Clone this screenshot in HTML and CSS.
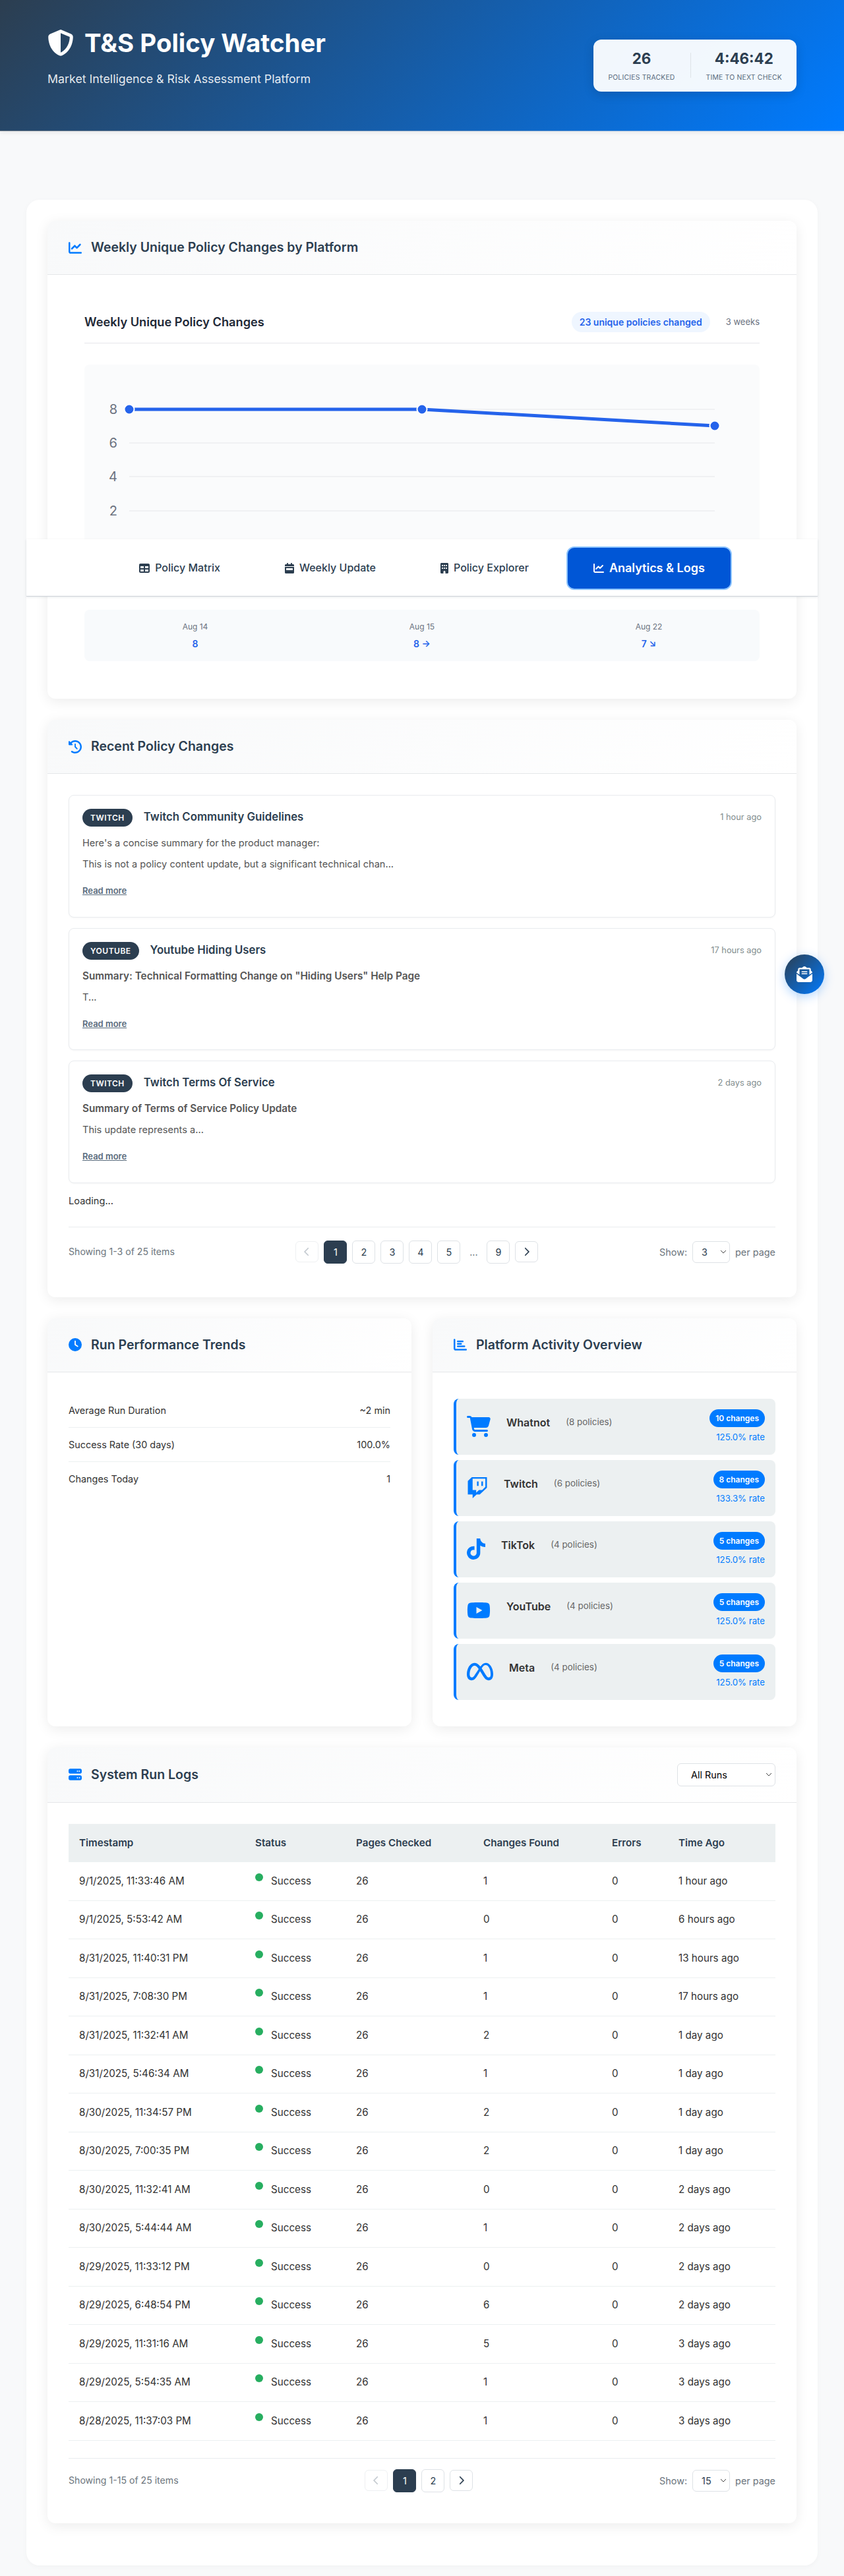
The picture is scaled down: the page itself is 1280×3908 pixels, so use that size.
FILE: index.html
```html
<!DOCTYPE html>
<html lang="en">
<head>
    <meta charset="UTF-8">
    <meta name="viewport" content="width=device-width, initial-scale=1.0">
    <title>T&amp;S Policy Watcher</title>
    <link rel="stylesheet" href="styles.css">
</head>
<body>
    <svg class="sprite" xmlns="http://www.w3.org/2000/svg">
        <symbol id="i-shield" viewBox="0 0 512 512"><path d="M256 0c4.6 0 9.2 1 13.4 2.9L457.7 82.8c22 9.3 38.4 31 38.3 57.2c-.5 99.2-41.3 280.7-213.6 363.2c-16.7 8-36.1 8-52.8 0C57.3 420.7 16.5 239.2 16 140c-.1-26.2 16.3-47.9 38.3-57.2L242.7 2.9C246.8 1 251.4 0 256 0zm0 66.8V444.8C394 378 431.1 230.1 432 141.4L256 66.8l0 0z"/></symbol>
        <symbol id="i-line" viewBox="0 0 512 512"><path d="M64 64c0-17.7-14.3-32-32-32S0 46.3 0 64V400c0 44.2 35.8 80 80 80H480c17.7 0 32-14.3 32-32s-14.3-32-32-32H80c-8.8 0-16-7.2-16-16V64zm406.6 86.6c12.5-12.5 12.5-32.8 0-45.3s-32.8-12.5-45.3 0L320 210.7l-57.4-57.4c-12.5-12.5-32.8-12.5-45.3 0l-112 112c-12.5 12.5-12.5 32.8 0 45.3s32.8 12.5 45.3 0L240 221.3l57.4 57.4c12.5 12.5 32.8 12.5 45.3 0l128-128z"/></symbol>
        <symbol id="i-history" viewBox="0 0 512 512"><path d="M75 75L41 41C25.9 25.9 0 36.6 0 57.9V168c0 13.3 10.7 24 24 24H134.1c21.4 0 32.1-25.9 17-41l-30.8-30.8C155 85.5 203 64 256 64c106 0 192 86 192 192s-86 192-192 192c-40.8 0-78.6-12.7-109.7-34.4c-14.5-10.1-34.4-6.6-44.6 7.9s-6.6 34.4 7.9 44.6C151.2 495 201.7 512 256 512c141.4 0 256-114.6 256-256S397.4 0 256 0C185.3 0 121.3 28.7 75 75zm181 53c-13.3 0-24 10.7-24 24V256c0 6.4 2.5 12.5 7 17l72 72c9.4 9.4 24.6 9.4 33.9 0s9.4-24.6 0-33.9l-65-65V152c0-13.3-10.7-24-24-24z"/></symbol>
        <symbol id="i-clock" viewBox="0 0 512 512"><path d="M256 0a256 256 0 1 1 0 512A256 256 0 1 1 256 0zM232 120V256c0 8 4 15.5 10.7 20l96 64c11 7.4 25.9 4.4 33.3-6.7s4.4-25.9-6.7-33.3L280 243.2V120c0-13.3-10.7-24-24-24s-24 10.7-24 24z"/></symbol>
        <symbol id="i-bars" viewBox="0 0 512 512"><path d="M32 32c17.7 0 32 14.3 32 32V400c0 8.8 7.2 16 16 16H480c17.7 0 32 14.3 32 32s-14.3 32-32 32H80c-44.2 0-80-35.8-80-80V64C0 46.3 14.3 32 32 32zm96 96c0-17.7 14.3-32 32-32l192 0c17.7 0 32 14.3 32 32s-14.3 32-32 32l-192 0c-17.7 0-32-14.3-32-32zm32 64H288c17.7 0 32 14.3 32 32s-14.3 32-32 32H160c-17.7 0-32-14.3-32-32s14.3-32 32-32zm0 96H416c17.7 0 32 14.3 32 32s-14.3 32-32 32H160c-17.7 0-32-14.3-32-32s14.3-32 32-32z"/></symbol>
        <symbol id="i-server" viewBox="0 0 512 512"><path d="M64 32C28.7 32 0 60.7 0 96v64c0 35.3 28.7 64 64 64H448c35.3 0 64-28.7 64-64V96c0-35.3-28.7-64-64-64H64zm280 72a24 24 0 1 1 0 48 24 24 0 1 1 0-48zm48 24a24 24 0 1 1 48 0 24 24 0 1 1 -48 0zM64 288c-35.3 0-64 28.7-64 64v64c0 35.3 28.7 64 64 64H448c35.3 0 64-28.7 64-64V352c0-35.3-28.7-64-64-64H64zm280 72a24 24 0 1 1 0 48 24 24 0 1 1 0-48zm56 24a24 24 0 1 1 48 0 24 24 0 1 1 -48 0z"/></symbol>
        <symbol id="i-table" viewBox="0 0 512 512"><path d="M64 256V160H224v96H64zm0 64H224v96H64V320zm224 96V320H448v96H288zM448 256H288V160H448v96zM64 32C28.7 32 0 60.7 0 96V416c0 35.3 28.7 64 64 64H448c35.3 0 64-28.7 64-64V96c0-35.3-28.7-64-64-64H64z"/></symbol>
        <symbol id="i-calendar" viewBox="0 0 448 512"><path d="M128 0c17.7 0 32 14.3 32 32V64H288V32c0-17.7 14.3-32 32-32s32 14.3 32 32V64h48c26.5 0 48 21.5 48 48v48H0V112C0 85.5 21.5 64 48 64H96V32c0-17.7 14.3-32 32-32zM0 192H448V464c0 26.5-21.5 48-48 48H48c-26.5 0-48-21.5-48-48V192zm80 64c-8.8 0-16 7.2-16 16v64c0 8.8 7.2 16 16 16H368c8.8 0 16-7.2 16-16V272c0-8.8-7.2-16-16-16H80z"/></symbol>
        <symbol id="i-building" viewBox="0 0 384 512"><path d="M48 0C21.5 0 0 21.5 0 48V464c0 26.5 21.5 48 48 48h96V432c0-26.5 21.5-48 48-48s48 21.5 48 48v80h96c26.5 0 48-21.5 48-48V48c0-26.5-21.5-48-48-48H48zM64 240c0-8.8 7.2-16 16-16h32c8.8 0 16 7.2 16 16v32c0 8.8-7.2 16-16 16H80c-8.8 0-16-7.2-16-16V240zm112-16h32c8.8 0 16 7.2 16 16v32c0 8.8-7.2 16-16 16H176c-8.8 0-16-7.2-16-16V240c0-8.8 7.2-16 16-16zm80 16c0-8.8 7.2-16 16-16h32c8.8 0 16 7.2 16 16v32c0 8.8-7.2 16-16 16H272c-8.8 0-16-7.2-16-16V240zM80 96h32c8.8 0 16 7.2 16 16v32c0 8.8-7.2 16-16 16H80c-8.8 0-16-7.2-16-16V112c0-8.8 7.2-16 16-16zm80 16c0-8.8 7.2-16 16-16h32c8.8 0 16 7.2 16 16v32c0 8.8-7.2 16-16 16H176c-8.8 0-16-7.2-16-16V112zM272 96h32c8.8 0 16 7.2 16 16v32c0 8.8-7.2 16-16 16H272c-8.8 0-16-7.2-16-16V112c0-8.8 7.2-16 16-16z"/></symbol>
        <symbol id="i-cart" viewBox="0 0 576 512"><path d="M0 24C0 10.7 10.7 0 24 0H69.5c22 0 41.5 12.8 50.6 32h411c26.3 0 45.5 25 38.6 50.4l-41 152.3c-8.5 31.4-37 53.3-69.5 53.3H170.7l5.4 28.5c2.2 11.3 12.1 19.5 23.6 19.5H488c13.3 0 24 10.7 24 24s-10.7 24-24 24H199.7c-34.6 0-64.3-24.6-70.7-58.5L77.4 54.5c-.7-3.8-4-6.5-7.9-6.5H24C10.7 48 0 37.3 0 24zM128 464a48 48 0 1 1 96 0 48 48 0 1 1 -96 0zm336-48a48 48 0 1 1 0 96 48 48 0 1 1 0-96z"/></symbol>
        <symbol id="i-twitch" viewBox="0 0 512 512"><path d="M391.17,103.47H352.54v109.7h38.63ZM285,103H246.37V212.75H285ZM120.83,0,24.31,91.42V420.58H140.14V512l96.53-91.42h77.25L487.69,256V0ZM449.07,237.75l-77.22,73.12H294.61l-67.6,64v-64H140.14V36.58H449.07Z"/></symbol>
        <symbol id="i-tiktok" viewBox="0 0 448 512"><path d="M448,209.91a210.06,210.06,0,0,1-122.77-39.25V349.38A162.55,162.55,0,1,1,185,188.31V278.2a74.62,74.62,0,1,0,52.23,71.18V0l88,0a121.18,121.18,0,0,0,1.86,22.17h0A122.18,122.18,0,0,0,381,102.39a121.43,121.43,0,0,0,67,20.14Z"/></symbol>
        <symbol id="i-youtube" viewBox="0 0 576 512"><path d="M549.655 124.083c-6.281-23.65-24.787-42.276-48.284-48.597C458.781 64 288 64 288 64S117.22 64 74.629 75.486c-23.497 6.322-42.003 24.947-48.284 48.597-11.412 42.867-11.412 132.305-11.412 132.305s0 89.438 11.412 132.305c6.281 23.65 24.787 41.5 48.284 47.821C117.22 448 288 448 288 448s170.78 0 213.371-11.486c23.497-6.321 42.003-24.171 48.284-47.821 11.412-42.867 11.412-132.305 11.412-132.305s0-89.438-11.412-132.305zm-317.51 213.508V175.185l142.739 81.205-142.739 81.201z"/></symbol>
        <symbol id="i-meta" viewBox="0 0 640 512"><path d="M640 317.9C640 409.2 600.6 466.4 529.7 466.4C467.1 466.4 433.9 431.8 372.8 329.8L341.4 277.2C333.1 264.7 326.9 253 320.2 242.2C300.1 276 273.1 325.2 273.1 325.2C206.1 441.8 168.5 466.4 116.2 466.4C43.42 466.4 0 409.1 0 320.5C0 177.5 79.78 42.4 183.9 42.4C234.1 42.4 277.7 67.08 328.7 131.9C365.8 81.8 406.8 42.4 459.3 42.4C558.4 42.4 640 168.1 640 317.9H640zM287.4 192.2C244.5 130.1 216.5 111.7 183 111.7C121.1 111.7 69.22 217.8 69.22 321.7C69.22 370.2 87.7 397.4 118.8 397.4C149 397.4 167.8 378.4 222 293.6C222 293.6 246.7 254.5 287.4 192.2V192.2zM531.2 397.4C563.4 397.4 578.1 369.9 578.1 322.5C578.1 198.3 523.8 97.08 454.9 97.08C421.7 97.08 393.8 123 360 175.1C369.4 188.9 379.1 204.1 389.3 220.5L426.8 282.9C485.5 377 500.3 397.4 531.2 397.4L531.2 397.4z"/></symbol>
        <symbol id="i-mail" viewBox="0 0 512 512"><path d="M215.4 96H144 107.8 96v8.8V144v40.4 89L.2 202.5c1.6-18.1 10.9-34.9 25.7-45.8L48 140.3V96c0-26.5 21.5-48 48-48h76.6l49.9-36.9C232.2 3.9 243.9 0 256 0s23.8 3.9 33.5 11L339.4 48H416c26.5 0 48 21.5 48 48v44.3l22.1 16.4c14.8 10.9 24.1 27.7 25.7 45.8L416 273.4v-89V144 104.8 96H404.2 368 296.6 215.4zM0 448V242.1L217.6 403.3c11.1 8.2 24.6 12.7 38.4 12.7s27.3-4.4 38.4-12.7L512 242.1V448v0c0 35.3-28.7 64-64 64H64c-35.3 0-64-28.7-64-64v0zM176 160H336c8.8 0 16 7.2 16 16s-7.2 16-16 16H176c-8.8 0-16-7.2-16-16s7.2-16 16-16zm0 64H336c8.8 0 16 7.2 16 16s-7.2 16-16 16H176c-8.8 0-16-7.2-16-16s7.2-16 16-16z"/></symbol>
        <symbol id="i-left" viewBox="0 0 320 512"><path d="M9.4 233.4c-12.5 12.5-12.5 32.8 0 45.3l192 192c12.5 12.5 32.8 12.5 45.3 0s12.5-32.8 0-45.3L77.3 256 246.6 86.6c12.5-12.5 12.5-32.8 0-45.3s-32.8-12.5-45.3 0l-192 192z"/></symbol>
        <symbol id="i-right" viewBox="0 0 320 512"><path d="M310.6 233.4c12.5 12.5 12.5 32.8 0 45.3l-192 192c-12.5 12.5-32.8 12.5-45.3 0s-12.5-32.8 0-45.3L242.7 256 73.4 86.6c-12.5-12.5-12.5-32.8 0-45.3s32.8-12.5 45.3 0l192 192z"/></symbol>
    </svg>

    <header class="site-header">
        <div class="brand">
            <h1><svg class="brand-icon"><use href="#i-shield"/></svg>T&amp;S Policy Watcher</h1>
            <p>Market Intelligence &amp; Risk Assessment Platform</p>
        </div>
        <div class="header-stats">
            <div class="stat"><div class="stat-value">26</div><div class="stat-label">Policies Tracked</div></div>
            <div class="stat-divider"></div>
            <div class="stat"><div class="stat-value">4:46:42</div><div class="stat-label">Time to Next Check</div></div>
        </div>
    </header>

    <nav class="tabs">
        <a class="tab"><svg class="tab-icon"><use href="#i-table"/></svg>Policy Matrix</a>
        <a class="tab"><svg class="tab-icon tab-icon-cal"><use href="#i-calendar"/></svg>Weekly Update</a>
        <a class="tab"><svg class="tab-icon tab-icon-bld"><use href="#i-building"/></svg>Policy Explorer</a>
        <a class="tab active"><svg class="tab-icon"><use href="#i-line"/></svg>Analytics &amp; Logs</a>
    </nav>

    <button class="fab"><svg class="fab-icon"><use href="#i-mail"/></svg></button>

    <main class="main">
        <section class="card">
            <div class="card-header">
                <h2><svg class="head-icon"><use href="#i-line"/></svg>Weekly Unique Policy Changes by Platform</h2>
            </div>
            <div class="card-body">
                <div class="chart-section">
                    <div class="chart-head">
                        <h3>Weekly Unique Policy Changes</h3>
                        <div class="chart-meta">
                            <span class="chart-total">23 unique policies changed</span>
                            <span class="chart-range">3 weeks</span>
                        </div>
                    </div>
                    <div class="chart-box">
                        <svg class="chart" viewBox="0 0 1024 348">
                            <g class="grid">
                                <line x1="68" y1="68" x2="956" y2="68"/>
                                <line x1="68" y1="119" x2="956" y2="119"/>
                                <line x1="68" y1="170" x2="956" y2="170"/>
                                <line x1="68" y1="222" x2="956" y2="222"/>
                            </g>
                            <g class="axis">
                                <text x="50" y="75">8</text>
                                <text x="50" y="126">6</text>
                                <text x="50" y="177">4</text>
                                <text x="50" y="229">2</text>
                            </g>
                            <polyline class="plot" points="68,68 512,68 956,93"/>
                            <circle class="point" cx="68" cy="68" r="7.5"/>
                            <circle class="point" cx="512" cy="68" r="7.5"/>
                            <circle class="point" cx="956" cy="93" r="7.5"/>
                        </svg>
                    </div>
                    <div class="week-stats">
                        <div class="week"><div class="week-date">Aug 14</div><div class="week-value">8</div></div>
                        <div class="week"><div class="week-date">Aug 15</div><div class="week-value">8 →</div></div>
                        <div class="week"><div class="week-date">Aug 22</div><div class="week-value">7 ↘</div></div>
                    </div>
                </div>
            </div>
        </section>

        <section class="card">
            <div class="card-header">
                <h2><svg class="head-icon"><use href="#i-history"/></svg>Recent Policy Changes</h2>
            </div>
            <div class="card-body">
                <div class="changes">
                    <article class="change">
                        <div class="change-head">
                            <span class="badge">Twitch</span>
                            <h4>Twitch Community Guidelines</h4>
                            <span class="change-time">1 hour ago</span>
                        </div>
                        <p>Here's a concise summary for the product manager:</p>
                        <p>This is not a policy content update, but a significant technical chan...</p>
                        <a class="read-more">Read more</a>
                    </article>
                    <article class="change">
                        <div class="change-head">
                            <span class="badge">YouTube</span>
                            <h4>Youtube Hiding Users</h4>
                            <span class="change-time">17 hours ago</span>
                        </div>
                        <p><strong>Summary: Technical Formatting Change on "Hiding Users" Help Page</strong></p>
                        <p>T...</p>
                        <a class="read-more">Read more</a>
                    </article>
                    <article class="change">
                        <div class="change-head">
                            <span class="badge">Twitch</span>
                            <h4>Twitch Terms Of Service</h4>
                            <span class="change-time">2 days ago</span>
                        </div>
                        <p><strong>Summary of Terms of Service Policy Update</strong></p>
                        <p>This update represents a...</p>
                        <a class="read-more">Read more</a>
                    </article>
                </div>
                <div class="loading">Loading...</div>
                <div class="pager">
                    <div class="pager-info">Showing 1-3 of 25 items</div>
                    <div class="pager-pages">
                        <button class="page-btn arrow disabled"><svg class="chev"><use href="#i-left"/></svg></button>
                        <button class="page-btn current">1</button>
                        <button class="page-btn">2</button>
                        <button class="page-btn">3</button>
                        <button class="page-btn">4</button>
                        <button class="page-btn">5</button>
                        <span class="page-gap">...</span>
                        <button class="page-btn">9</button>
                        <button class="page-btn arrow"><svg class="chev"><use href="#i-right"/></svg></button>
                    </div>
                    <div class="pager-size">
                        <label>Show:</label>
                        <select class="size-select"><option>3</option></select>
                        <span>per page</span>
                    </div>
                </div>
            </div>
        </section>

        <div class="two-col">
            <section class="card">
                <div class="card-header">
                    <h2><svg class="head-icon"><use href="#i-clock"/></svg>Run Performance Trends</h2>
                </div>
                <div class="card-body">
                    <div class="metric"><span>Average Run Duration</span><span>~2 min</span></div>
                    <div class="metric"><span>Success Rate (30 days)</span><span>100.0%</span></div>
                    <div class="metric"><span>Changes Today</span><span>1</span></div>
                </div>
            </section>
            <section class="card">
                <div class="card-header">
                    <h2><svg class="head-icon"><use href="#i-bars"/></svg>Platform Activity Overview</h2>
                </div>
                <div class="card-body">
                    <div class="platforms">
                        <div class="platform">
                            <svg class="plat-icon w-cart"><use href="#i-cart"/></svg>
                            <span class="plat-name">Whatnot</span>
                            <span class="plat-count">(8 policies)</span>
                            <div class="plat-stats"><span class="plat-badge">10 changes</span><span class="plat-rate">125.0% rate</span></div>
                        </div>
                        <div class="platform">
                            <svg class="plat-icon w-twitch"><use href="#i-twitch"/></svg>
                            <span class="plat-name">Twitch</span>
                            <span class="plat-count">(6 policies)</span>
                            <div class="plat-stats"><span class="plat-badge">8 changes</span><span class="plat-rate">133.3% rate</span></div>
                        </div>
                        <div class="platform">
                            <svg class="plat-icon w-tiktok"><use href="#i-tiktok"/></svg>
                            <span class="plat-name">TikTok</span>
                            <span class="plat-count">(4 policies)</span>
                            <div class="plat-stats"><span class="plat-badge">5 changes</span><span class="plat-rate">125.0% rate</span></div>
                        </div>
                        <div class="platform">
                            <svg class="plat-icon w-cart"><use href="#i-youtube"/></svg>
                            <span class="plat-name">YouTube</span>
                            <span class="plat-count">(4 policies)</span>
                            <div class="plat-stats"><span class="plat-badge">5 changes</span><span class="plat-rate">125.0% rate</span></div>
                        </div>
                        <div class="platform">
                            <svg class="plat-icon w-meta"><use href="#i-meta"/></svg>
                            <span class="plat-name">Meta</span>
                            <span class="plat-count">(4 policies)</span>
                            <div class="plat-stats"><span class="plat-badge">5 changes</span><span class="plat-rate">125.0% rate</span></div>
                        </div>
                    </div>
                </div>
            </section>
        </div>

        <section class="card">
            <div class="card-header card-header-logs">
                <h2><svg class="head-icon"><use href="#i-server"/></svg>System Run Logs</h2>
                <select class="log-filter"><option>All Runs</option></select>
            </div>
            <div class="card-body">
                <table class="logs">
                    <thead>
                        <tr>
                            <th class="c-time">Timestamp</th>
                            <th class="c-status">Status</th>
                            <th class="c-pages">Pages Checked</th>
                            <th class="c-changes">Changes Found</th>
                            <th class="c-errors">Errors</th>
                            <th>Time Ago</th>
                        </tr>
                    </thead>
                    <tbody>
                        <tr><td>9/1/2025, 11:33:46 AM</td><td><span class="dot"></span>Success</td><td>26</td><td>1</td><td>0</td><td>1 hour ago</td></tr>
                        <tr><td>9/1/2025, 5:53:42 AM</td><td><span class="dot"></span>Success</td><td>26</td><td>0</td><td>0</td><td>6 hours ago</td></tr>
                        <tr><td>8/31/2025, 11:40:31 PM</td><td><span class="dot"></span>Success</td><td>26</td><td>1</td><td>0</td><td>13 hours ago</td></tr>
                        <tr><td>8/31/2025, 7:08:30 PM</td><td><span class="dot"></span>Success</td><td>26</td><td>1</td><td>0</td><td>17 hours ago</td></tr>
                        <tr><td>8/31/2025, 11:32:41 AM</td><td><span class="dot"></span>Success</td><td>26</td><td>2</td><td>0</td><td>1 day ago</td></tr>
                        <tr><td>8/31/2025, 5:46:34 AM</td><td><span class="dot"></span>Success</td><td>26</td><td>1</td><td>0</td><td>1 day ago</td></tr>
                        <tr><td>8/30/2025, 11:34:57 PM</td><td><span class="dot"></span>Success</td><td>26</td><td>2</td><td>0</td><td>1 day ago</td></tr>
                        <tr><td>8/30/2025, 7:00:35 PM</td><td><span class="dot"></span>Success</td><td>26</td><td>2</td><td>0</td><td>1 day ago</td></tr>
                        <tr><td>8/30/2025, 11:32:41 AM</td><td><span class="dot"></span>Success</td><td>26</td><td>0</td><td>0</td><td>2 days ago</td></tr>
                        <tr><td>8/30/2025, 5:44:44 AM</td><td><span class="dot"></span>Success</td><td>26</td><td>1</td><td>0</td><td>2 days ago</td></tr>
                        <tr><td>8/29/2025, 11:33:12 PM</td><td><span class="dot"></span>Success</td><td>26</td><td>0</td><td>0</td><td>2 days ago</td></tr>
                        <tr><td>8/29/2025, 6:48:54 PM</td><td><span class="dot"></span>Success</td><td>26</td><td>6</td><td>0</td><td>2 days ago</td></tr>
                        <tr><td>8/29/2025, 11:31:16 AM</td><td><span class="dot"></span>Success</td><td>26</td><td>5</td><td>0</td><td>3 days ago</td></tr>
                        <tr><td>8/29/2025, 5:54:35 AM</td><td><span class="dot"></span>Success</td><td>26</td><td>1</td><td>0</td><td>3 days ago</td></tr>
                        <tr><td>8/28/2025, 11:37:03 PM</td><td><span class="dot"></span>Success</td><td>26</td><td>1</td><td>0</td><td>3 days ago</td></tr>
                    </tbody>
                </table>
                <div class="pager pager-logs">
                    <div class="pager-info">Showing 1-15 of 25 items</div>
                    <div class="pager-pages">
                        <button class="page-btn arrow disabled"><svg class="chev"><use href="#i-left"/></svg></button>
                        <button class="page-btn current">1</button>
                        <button class="page-btn">2</button>
                        <button class="page-btn arrow"><svg class="chev"><use href="#i-right"/></svg></button>
                    </div>
                    <div class="pager-size">
                        <label>Show:</label>
                        <select class="size-select"><option>15</option></select>
                        <span>per page</span>
                    </div>
                </div>
            </div>
        </section>
    </main>
</body>
</html>
```

FILE: styles.css
```css
* { box-sizing: border-box; }
html, body { margin: 0; padding: 0; }
body { position: relative; font-family: "Inter", "Liberation Sans", sans-serif; background-color: #f8f9fa; color: #333; font-size: 14px; line-height: 1.6; }
.sprite { display: none; }
h1, h2, h3, h4, p { margin: 0; }

/* header */
.site-header { display: flex; justify-content: space-between; align-items: center; height: 199px; padding: 0 72px; color: #fff; background: linear-gradient(135deg, #2c3e50 0%, #007bff 100%); border-bottom: 1px solid rgba(255, 255, 255, 0.3); box-shadow: 0 2px 6px rgba(0, 0, 0, 0.08); }
.brand { align-self: flex-start; padding-top: 41px; }
.brand h1 { display: flex; align-items: center; gap: 16px; font-size: 38.4px; font-weight: 700; line-height: 48px; }
.brand-icon { width: 40px; height: 40px; fill: #fff; }
.brand p { margin-top: 17px; font-size: 17.8px; line-height: 28px; color: rgba(255, 255, 255, 0.9); }
.header-stats { display: flex; align-items: center; gap: 23px; height: 79px; padding: 0 22px; background: rgba(255, 255, 255, 0.95); border-radius: 12px; box-shadow: 0 4px 16px rgba(0, 0, 0, 0.15); }
.stat { text-align: center; }
.stat-value { font-size: 22.4px; font-weight: 700; line-height: 32px; color: #2c3e50; }
.stat-label { margin-top: 6px; font-size: 10.4px; line-height: 14px; text-transform: uppercase; letter-spacing: 0.2px; color: #5a6c7d; }
.stat-divider { width: 1px; height: 38px; background: #dfe4e8; }

/* floating bits */
.tabs { position: absolute; top: 818px; left: 40px; right: 40px; z-index: 5; display: flex; justify-content: center; gap: 16px; padding: 11px 0 9px; background: #fff; border-bottom: 1px solid #cfd3d9; box-shadow: 0 1px 3px rgba(44, 62, 80, 0.12); }
.tab { display: flex; align-items: center; gap: 8px; height: 66px; padding: 0 39px; font-size: 16px; font-weight: 500; color: #2c3e50; border: 2px solid transparent; border-radius: 12px; }
.tab.active { background: #0056d6; color: #fff; font-size: 18px; font-weight: 600; border-color: #8ec5ff; }
.tab-icon { width: 16px; height: 16px; fill: currentColor; }
.tab-icon-cal { width: 14px; }
.tab-icon-bld { width: 12px; }
.fab { position: absolute; top: 1448px; right: 30px; z-index: 6; display: flex; align-items: center; justify-content: center; width: 60px; height: 60px; padding: 0; border: none; border-radius: 50%; background: linear-gradient(135deg, #2c3e50, #007bff); box-shadow: 0 4px 16px rgba(0, 123, 255, 0.3); }
.fab-icon { width: 24px; height: 24px; fill: #fff; }

/* main */
.main { margin: 104px 40px 16px; padding: 32px; background: #fff; border-radius: 20px; box-shadow: 0 2px 8px rgba(0, 0, 0, 0.03); }
.card { margin-bottom: 32px; background: #fff; border-radius: 12px; box-shadow: 0 4px 20px rgba(0, 0, 0, 0.08); }
.card-header { display: flex; align-items: center; justify-content: space-between; padding: 24px 32px; border-bottom: 1px solid #e5e7e9; background: linear-gradient(135deg, #f8f9fa, #fff); border-radius: 12px 12px 0 0; }
.card-header h2 { display: flex; align-items: center; gap: 14px; font-size: 19.5px; font-weight: 600; line-height: 33px; color: #2c3e50; }
.head-icon { width: 20px; height: 20px; fill: #007bff; }
.card-body { padding: 32px; }
.log-filter { width: 149px; height: 35px; padding: 0 20px; font-family: inherit; font-size: 14.4px; color: #000; border: 1px solid #dee2e6; border-radius: 6px; }
.log-filter, .size-select { appearance: none; background: #fff url("data:image/svg+xml,%3Csvg xmlns='http://www.w3.org/2000/svg' viewBox='0 0 10 6'%3E%3Cpath d='M1 1l4 4 4-4' fill='none' stroke='%23444' stroke-width='1'/%3E%3C/svg%3E") no-repeat right 4px center / 10px 6px; }

/* chart */
.chart-section { padding: 24px 24px 25px; }
.chart-head { display: flex; justify-content: space-between; align-items: center; padding-bottom: 16px; border-bottom: 1px solid #e5e7eb; }
.chart-head h3 { font-size: 18.2px; font-weight: 600; color: #1f2937; }
.chart-meta { display: flex; align-items: center; gap: 24px; }
.chart-total { height: 31px; padding: 0 12px; font-size: 14px; font-weight: 600; line-height: 31px; color: #2563eb; background: #eff6ff; border-radius: 16px; }
.chart-range { font-size: 13px; color: #6b7280; }
.chart-box { height: 348px; margin: 32px 0 24px; background: #fafbfc; border-radius: 8px; }
.chart { display: block; width: 100%; height: 100%; }
.grid line { stroke: #f0f1f3; stroke-width: 2; }
.axis text { font-family: "Inter", "Liberation Sans", sans-serif; font-size: 20px; fill: #6b7280; text-anchor: end; }
.plot { fill: none; stroke: #2563eb; stroke-width: 5; }
.point { fill: #2563eb; stroke: #fff; stroke-width: 2; }
.week-stats { display: grid; grid-template-columns: repeat(3, 1fr); gap: 40px; height: 78px; padding: 0 16px; align-items: center; background: #f8fafc; border-radius: 8px; text-align: center; }
.week-date { font-size: 12px; line-height: 20px; color: #6b7280; }
.week-value { margin-top: 6px; font-size: 14px; font-weight: 600; line-height: 20px; color: #2563eb; }

/* recent changes */
.changes { display: flex; flex-direction: column; gap: 16px; }
.change { height: 185.6px; padding: 20px; background: #fff; border: 1px solid #e9ecef; border-radius: 8px; box-shadow: 0 1px 3px rgba(0, 0, 0, 0.04); }
.change-head { display: flex; align-items: center; gap: 17px; margin-bottom: 14px; }
.change-head h4 { font-size: 16.8px; font-weight: 600; line-height: 24px; color: #2c3e50; margin-top: -3px; }
.badge { height: 27px; padding: 0 12px; font-size: 12px; font-weight: 600; line-height: 27px; letter-spacing: 0.5px; text-transform: uppercase; color: #fff; background: #2c3e50; border-radius: 14px; }
.change-time { margin-left: auto; font-size: 12.8px; color: #7f8c8d; }
.change p { margin-bottom: 9.6px; font-size: 14.6px; line-height: 22.4px; color: #555; }
.change p strong { font-size: 15.3px; font-weight: 600; }
.read-more { display: inline-block; padding-top: 9px; font-size: 13px; font-weight: 600; line-height: 20px; color: #5a6c7d; text-decoration: underline; }
.loading { margin-top: 16px; font-size: 14.6px; line-height: 23px; color: #333; }

/* pagination */
.pager { display: flex; justify-content: space-between; align-items: center; margin-top: 27px; padding: 20px 0 19px; border-top: 1px solid #e9ecef; }
.pager-logs { margin-top: 26px; padding: 16px 0 15px; }
.pager-info { font-size: 14.1px; color: #6c757d; }
.pager-pages { display: flex; align-items: center; gap: 8px; }
.page-btn { width: 35px; height: 35px; padding: 0; font-family: inherit; font-size: 14.4px; color: #2c3e50; background: #fff; border: 1px solid #dee2e6; border-radius: 6px; }
.page-btn.current { background: #2c3e50; border-color: #2c3e50; color: #fff; }
.page-btn.arrow { height: 32px; }
.page-btn.disabled { color: #c4cad0; border-color: #eef0f2; }
.chev { display: block; width: 9px; height: 14px; margin: 0 auto; fill: currentColor; }
.page-gap { width: 24px; font-size: 14.4px; text-align: center; color: #6c757d; }
.pager-size { display: flex; align-items: center; gap: 8px; font-size: 14.4px; color: #6c757d; }
.size-select { width: 57px; height: 33px; padding: 0 13px; font-family: inherit; font-size: 14.4px; color: #2c3e50; border: 1px solid #dee2e6; border-radius: 6px; }

/* two columns */
.two-col { display: grid; grid-template-columns: 1fr 1fr; gap: 32px; }
.metric { display: flex; justify-content: space-between; padding: 14px 0; font-size: 14.4px; line-height: 23px; color: #333; border-bottom: 1px solid #ecf0f1; }
.metric:last-child { border-bottom: none; }
.platforms { display: flex; flex-direction: column; gap: 8px; padding: 8px 0; }
.platform { display: flex; align-items: center; gap: 24px; height: 85px; padding: 0 16px; background: #ecf0f1; border-left: 4px solid #007bff; border-radius: 8px; }
.plat-icon { height: 32px; fill: #007bff; flex-shrink: 0; }
.w-cart { width: 36px; }
.w-twitch { width: 32px; }
.w-tiktok { width: 28px; }
.w-meta { width: 40px; }
.plat-name { margin-top: -10px; font-size: 16px; font-weight: 600; color: #333; }
.plat-count { margin-top: -14px; font-size: 13.4px; color: #666; }
.plat-stats { display: flex; flex-direction: column; align-items: flex-end; gap: 5px; margin-left: auto; }
.plat-badge { height: 27px; padding: 0 9px; font-size: 12px; font-weight: 600; line-height: 27px; color: #fff; background: #007bff; border-radius: 14px; }
.plat-rate { font-size: 13.2px; line-height: 20px; color: #007bff; }

/* log table */
.logs { width: 100%; border-collapse: collapse; table-layout: fixed; font-size: 15.2px; }
.logs th { height: 58px; padding: 0 16px; text-align: left; font-weight: 600; color: #2c3e50; background: #ecf0f1; }
.logs td { height: 58.5px; padding: 0 16px; color: #333; border-bottom: 1px solid #ecf0f1; }
.c-time { width: 267px; }
.c-status { width: 153px; }
.c-pages { width: 193px; }
.c-changes { width: 195px; }
.c-errors { width: 101px; }
.dot { display: inline-block; width: 12px; height: 12px; margin-right: 12px; vertical-align: 5px; background: #27ae60; border-radius: 50%; }
```
